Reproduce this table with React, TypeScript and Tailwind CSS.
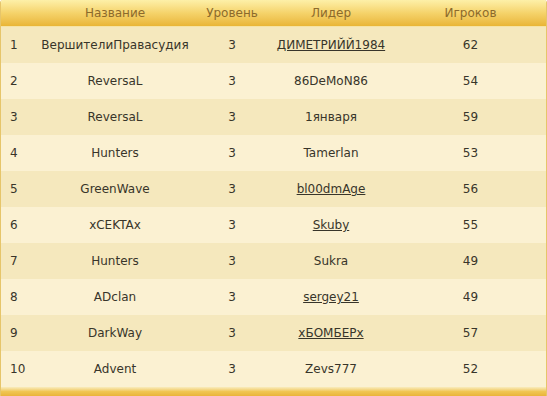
import React from 'react';

type Clan = { name: string; level: number; leader: string; linked: boolean; players: number };

const clans: Clan[] = [
  { name: 'ВершителиПравасудия', level: 3, leader: 'ДИМЕТРИЙЙ1984', linked: true, players: 62 },
  { name: 'ReversaL', level: 3, leader: '86DeMoN86', linked: false, players: 54 },
  { name: 'ReversaL', level: 3, leader: '1января', linked: false, players: 59 },
  { name: 'Hunters', level: 3, leader: 'Tamerlan', linked: false, players: 53 },
  { name: 'GreenWave', level: 3, leader: 'bl00dmAge', linked: true, players: 56 },
  { name: 'xCEKTAx', level: 3, leader: 'Skuby', linked: true, players: 55 },
  { name: 'Hunters', level: 3, leader: 'Sukra', linked: false, players: 49 },
  { name: 'ADclan', level: 3, leader: 'sergey21', linked: true, players: 49 },
  { name: 'DarkWay', level: 3, leader: 'xБОМБЕРx', linked: true, players: 57 },
  { name: 'Advent', level: 3, leader: 'Zevs777', linked: false, players: 52 },
];

const cols = 'grid grid-cols-[30px_168px_66px_132px_1fr]';

export default function App() {
  return (
    <div className="w-[547px] h-[396px] bg-white font-['DejaVu_Sans',sans-serif] text-[12px]">
      <div className="h-full flex flex-col border-x border-[#e6c56a] rounded-t-[3px] overflow-hidden">
        {/* Header */}
        <div className={`${cols} h-[27px] items-center bg-gradient-to-b from-[#fdf0a8] via-[#f5d36a] to-[#e9b535] text-[#8c6a2c] border-b border-[#f6e3a4]`}>
          <span />
          <span className="text-center">Название</span>
          <span className="text-center">Уровень</span>
          <span className="text-center">Лидер</span>
          <span className="text-center pr-[2px]">Игроков</span>
        </div>

        {/* Rows */}
        {clans.map((c, i) => (
          <div
            key={i}
            className={`${cols} h-[36px] items-center text-[#38352a] ${i % 2 === 0 ? 'bg-[#f5e8bd]' : 'bg-[#fbf1d2]'}`}
          >
            <span className="pl-[9px]">{i + 1}</span>
            <span className="text-center">{c.name}</span>
            <span className="text-center">{c.level}</span>
            <span className="text-center">
              {c.linked ? <a className="underline">{c.leader}</a> : c.leader}
            </span>
            <span className="text-center pr-[2px]">{c.players}</span>
          </div>
        ))}

        {/* Footer */}
        <div className="flex-1 bg-gradient-to-b from-[#f9ecbc] via-[#f0c653] to-[#e9b43a]" />
      </div>
    </div>
  );
}
